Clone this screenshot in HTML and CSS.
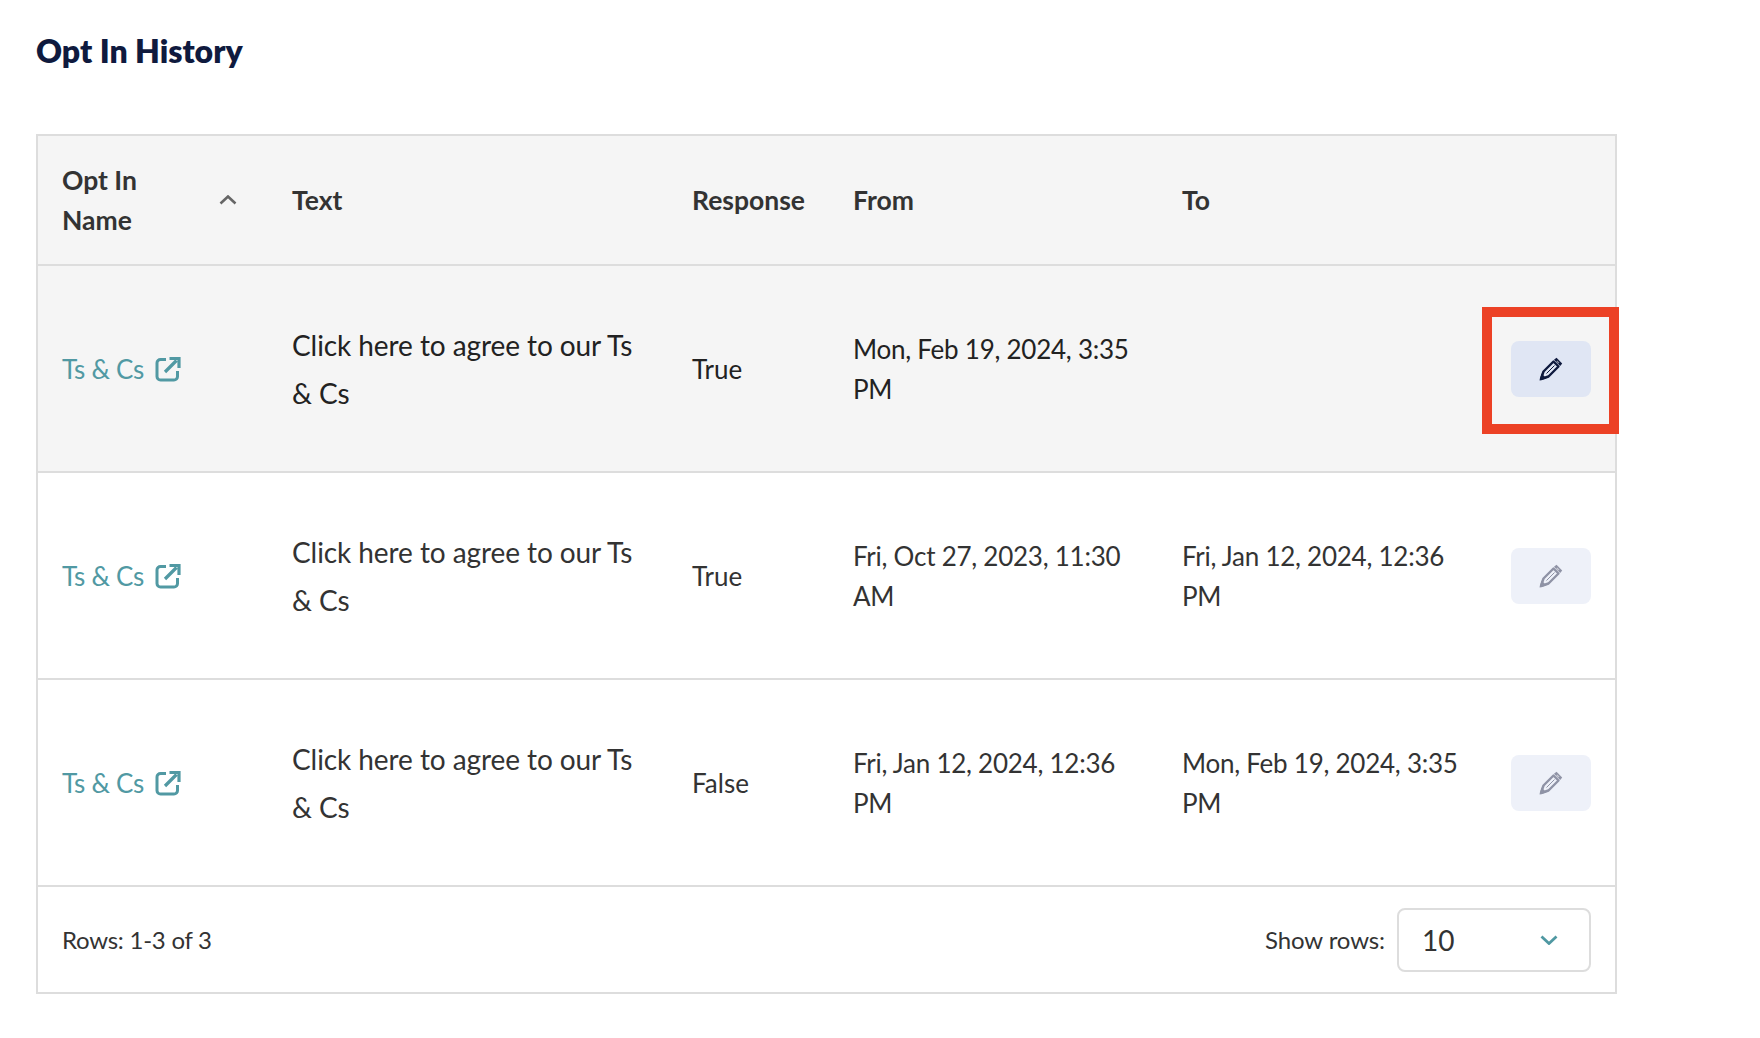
FILE: index.html
```html
<!DOCTYPE html>
<html lang="en">
<head>
<meta charset="utf-8">
<title>Opt In History</title>
<link rel="stylesheet" href="styles.css">
</head>
<body>
<svg class="defs" width="0" height="0" aria-hidden="true">
  <symbol id="ext" viewBox="0 0 26 26">
    <path d="M11 3.500H5.500A3.500 3.500 0 0 0 2 7v13.500A3.500 3.500 0 0 0 5.500 24H19a3.500 3.500 0 0 0 3.500-3.500V15" fill="none" stroke="currentColor" stroke-width="3"/>
    <path d="M10 16 21.500 4.500M14.500 2.500H24V12" fill="none" stroke="currentColor" stroke-width="3.200"/>
  </symbol>
  <symbol id="pencil" viewBox="0 0 24 24">
    <path d="M2 22 4.500 14.500 14.500 4.500 19.500 9.500 9.500 19.500Z" fill="none" stroke="currentColor" stroke-width="2.400" stroke-linejoin="round"/>
    <path d="M7.500 16.500 15.500 8.500" fill="none" stroke="currentColor" stroke-width="1"/>
    <path d="M.5 23.500 2.500 16.500 7.500 21.500Z" fill="currentColor"/>
    <path d="M15 2.800 17.500 .8 23.200 6.500 21.200 9Z" fill="currentColor"/>
    <path d="M17.800 4 20 6.200" fill="none" stroke="#fff" stroke-opacity=".55" stroke-width="1.200"/>
  </symbol>
</svg>
<main class="page">
  <h1 class="title">Opt In History</h1>
  <section class="card">
    <table class="grid">
      <colgroup>
        <col class="c-name"><col class="c-text"><col class="c-resp"><col class="c-from"><col class="c-to"><col class="c-act">
      </colgroup>
      <thead>
        <tr class="head">
          <th>
            <div class="sort"><span>Opt In<br>Name</span>
              <svg class="caret" viewBox="0 0 18 10" width="18" height="10"><path d="M1.500 8.500 9 1.500l7.500 7" fill="none" stroke="currentColor" stroke-width="2.600"/></svg>
            </div>
          </th>
          <th>Text</th>
          <th>Response</th>
          <th>From</th>
          <th>To</th>
          <th></th>
        </tr>
      </thead>
      <tbody>
        <tr class="row selected">
          <td><a class="link" href="#">Ts &amp; Cs<svg class="ext"><use href="#ext"/></svg></a></td>
          <td class="long">Click here to agree to our Ts &amp; Cs</td>
          <td>True</td>
          <td class="date">Mon, Feb 19, 2024, 3:35 PM</td>
          <td class="date"></td>
          <td class="act"><span class="edit-mark"><button class="edit" type="button" aria-label="Edit"><svg class="pencil"><use href="#pencil"/></svg></button></span></td>
        </tr>
        <tr class="row">
          <td><a class="link" href="#">Ts &amp; Cs<svg class="ext"><use href="#ext"/></svg></a></td>
          <td class="long">Click here to agree to our Ts &amp; Cs</td>
          <td>True</td>
          <td class="date">Fri, Oct 27, 2023, 11:30 AM</td>
          <td class="date">Fri, Jan 12, 2024, 12:36 PM</td>
          <td class="act"><button class="edit dim" type="button" aria-label="Edit"><svg class="pencil"><use href="#pencil"/></svg></button></td>
        </tr>
        <tr class="row">
          <td><a class="link" href="#">Ts &amp; Cs<svg class="ext"><use href="#ext"/></svg></a></td>
          <td class="long">Click here to agree to our Ts &amp; Cs</td>
          <td>False</td>
          <td class="date">Fri, Jan 12, 2024, 12:36 PM</td>
          <td class="date">Mon, Feb 19, 2024, 3:35 PM</td>
          <td class="act"><button class="edit dim" type="button" aria-label="Edit"><svg class="pencil"><use href="#pencil"/></svg></button></td>
        </tr>
      </tbody>
    </table>
    <footer class="foot">
      <span class="rows">Rows: 1-3 of 3</span>
      <div class="pager">
        <span>Show rows:</span>
        <div class="select"><span>10</span>
          <svg class="chev" viewBox="0 0 18 10" width="18" height="10"><path d="M1.500 1.500 9 8.500l7.500-7" fill="none" stroke="currentColor" stroke-width="2.800"/></svg>
        </div>
      </div>
    </footer>
  </section>
</main>
</body>
</html>
```

FILE: styles.css
```css
* { box-sizing: border-box; }
html, body { margin: 0; background: #fff; }
body { font-family: Lato, "Liberation Sans", sans-serif; color: #333; }
.defs { display: block; height: 0; }
.page { padding: 30px 143px 44px 36px; }
.title { margin: 0 0 62px; font-size: 32px; line-height: 42px; font-weight: 800; color: #0f1a3e; }
.card { border: 2px solid #ddd; }
.grid { width: 100%; border-collapse: collapse; table-layout: fixed; }
.c-name { width: 230px; }
.c-text { width: 400px; }
.c-resp { width: 161px; }
.c-from { width: 329px; }
.c-to { width: 329px; }
th, td { padding: 0 0 0 24px; text-align: left; vertical-align: middle; }
.head { height: 129px; background: #f5f5f5; border-bottom: 2px solid #ddd; }
th { font-size: 26.5px; line-height: 40px; font-weight: 700; color: #333; }
.sort { display: flex; align-items: center; justify-content: space-between; padding-right: 31px; }
.caret { color: #666; }
.row { height: 207px; border-bottom: 2px solid #ddd; }
.selected { background: #f5f5f5; }
td { font-size: 26px; line-height: 40px; color: #333; }
.selected td { color: #222; }
.long { font-size: 28px; line-height: 48px; padding-right: 24px; letter-spacing: -0.08px; }
.date { padding-right: 24px; letter-spacing: -0.25px; }
.link { display: inline-flex; align-items: center; gap: 11px; color: #5199a3; text-decoration: none; letter-spacing: -0.3px; }
.ext { width: 26px; height: 26px; }
.act { padding: 0 24px 0 0; text-align: right; }
.edit { display: inline-flex; align-items: center; justify-content: center; width: 80px; height: 56px; padding: 0; border: 0; border-radius: 8px; background: #e0e6f4; color: #0f1a3e; vertical-align: middle; }
.edit.dim { background: #eef1f9; color: #8f93a6; }
.pencil { width: 24px; height: 24px; }
.edit-mark { position: relative; display: inline-block; line-height: 0; }
.edit-mark::after { content: ""; position: absolute; inset: -34px -28px -37px -29px; border: 10px solid #ec4125; pointer-events: none; }
.foot { display: flex; align-items: center; justify-content: space-between; height: 105px; padding: 0 24px; font-size: 24px; color: #333; }
.rows { letter-spacing: -0.25px; }
.pager { display: flex; align-items: center; gap: 12px; letter-spacing: -0.1px; }
.select { display: flex; align-items: center; justify-content: space-between; width: 194px; height: 64px; padding: 0 31px 0 23px; border: 2px solid #ddd; border-radius: 8px; font-size: 28px; background: #fff; }
.chev { color: #4f98a2; }
```
